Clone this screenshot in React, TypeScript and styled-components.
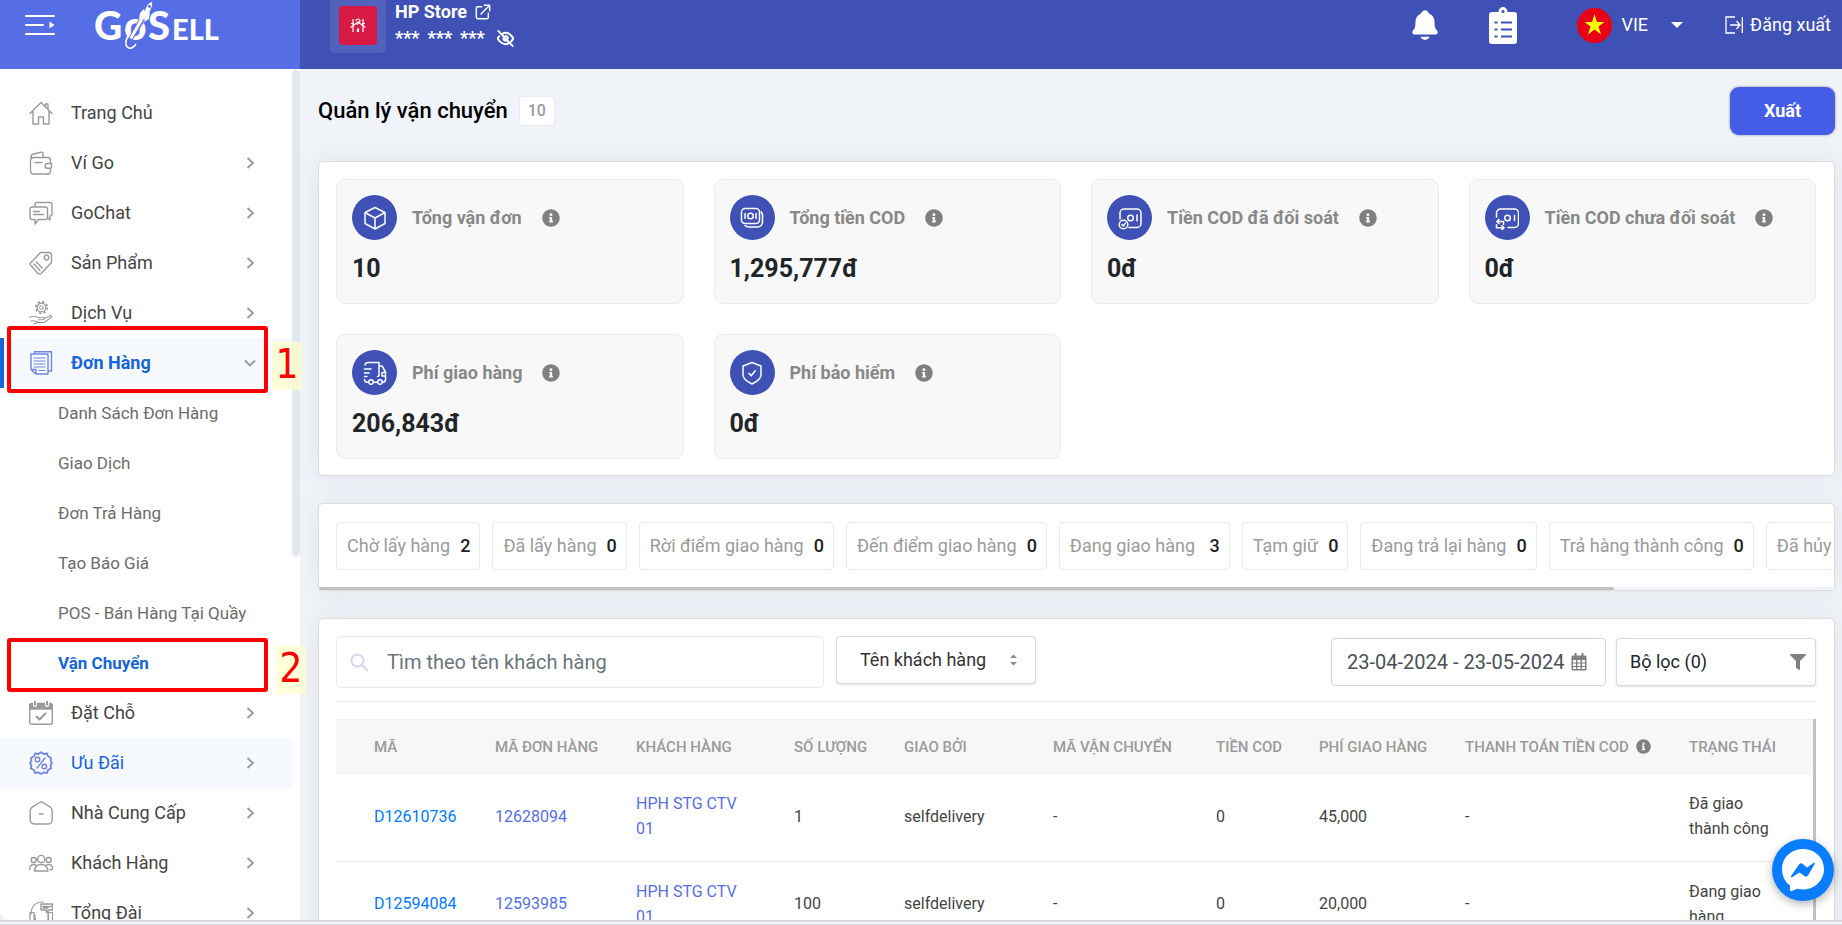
import React from "react";
import styled, { createGlobalStyle } from "styled-components";
import { FaFilter, FaInfoCircle } from "react-icons/fa";
import { IoNotifications } from "react-icons/io5";

const GlobalStyle = createGlobalStyle`
  *, *::before, *::after { box-sizing: border-box; }
  body { margin: 0; background: #f0f3f8; color: #212529; font: 16px/24px Roboto, "Open Sans", sans-serif; }
  button, input, select { font: inherit; color: inherit; }
  a { color: inherit; text-decoration: none; }
  ul { list-style: none; margin: 0; padding: 0; }
  h1, h2, p { margin: 0; font: inherit; }
`;

/* ---------- shell ---------- */

const Shell = styled.div`
  display: grid;
  grid-template: 69px minmax(0, 1fr) 5px / 300px minmax(0, 1fr);
  height: 100vh;
  overflow: hidden;
`;

const BottomEdge = styled.div`
  grid-column: 1 / -1;
  border-top: 2px solid #dcdcdc;
  border-bottom: 1px solid #c9d9de;
  background: #f5f6f7;
  position: relative;
  z-index: 3;
`;

/* ---------- header ---------- */

const Brand = styled.div`
  display: flex;
  align-items: flex-start;
  gap: 37px;
  padding: 0 0 0 24px;
  background: #556ee6;
  color: #fff;
`;

const IconButton = styled.button`
  display: flex;
  padding: 0;
  border: 0;
  background: none;
  color: inherit;
  cursor: pointer;
`;

const MenuToggle = styled(IconButton)`
  margin-top: 12px;
`;

const TopBar = styled.header`
  display: flex;
  align-items: flex-start;
  justify-content: space-between;
  padding: 0 11px 0 30px;
  background: #3f51b5;
  color: #fff;
  font-size: 18px;
`;

const Store = styled.div`
  display: flex;
  gap: 9px;
`;

const StoreLogo = styled.div`
  width: 56px;
  height: 53px;
  padding: 6px 9px 8px;
  border-radius: 0 0 5px 5px;
  background: #5262bc;
`;

const StoreInfo = styled.div`
  font-weight: 700;
`;

const StoreLine = styled.div`
  display: flex;
  align-items: center;
  gap: 8px;
  height: 24px;
`;

const Masked = styled(StoreLine)`
  height: 28px;
  svg { margin-left: 4px; }
`;

const TopActions = styled.div`
  display: flex;
  align-items: center;
  height: 50px;
`;

const BellButton = styled(IconButton)`
  margin-right: 47px;
`;

const TaskButton = styled(IconButton)`
  margin-right: 60px;
`;

const LanguageButton = styled(IconButton)`
  align-items: center;
  gap: 9px;
  margin-right: 42px;
`;

const Caret = styled.span`
  margin-left: 14px;
  border: 6px solid transparent;
  border-top-color: #fff;
  border-bottom: 0;
`;

const LogoutLink = styled.a`
  display: flex;
  align-items: center;
  gap: 7px;
`;

/* ---------- sidebar ---------- */

const Sidebar = styled.aside`
  position: relative;
  z-index: 2;
  display: flex;
  min-height: 0;
  background: #fff;
  border-bottom-left-radius: 10px;
`;

const Nav = styled.nav`
  flex: 1;
  padding-top: 19px;
`;

const ScrollRail = styled.div`
  width: 8px;
  padding-top: 1px;
`;

const ScrollThumb = styled.div`
  height: 486px;
  border-radius: 4px;
  background: #e1e7ef;
`;

const NavItem = styled.li`
  position: relative;
`;

const NavLink = styled.a<{ $tone?: "active" | "hover" }>`
  display: flex;
  align-items: center;
  gap: 18px;
  height: 50px;
  padding: 0 36px 0 25px;
  border-left: 4px solid ${(p) => (p.$tone === "active" ? "#1665d8" : "transparent")};
  background: ${(p) => (p.$tone ? "#f6f9fd" : "transparent")};
  color: ${(p) => (p.$tone ? "#1665d8" : "#444")};
  font-size: 18px;
  font-weight: ${(p) => (p.$tone === "active" ? 700 : 400)};
  svg:first-child { color: ${(p) => (p.$tone ? "#7185dd" : "#9a9a9a")}; flex: none; }
`;

const NavLabel = styled.span`
  flex: 1;
  white-space: nowrap;
`;

const SubLink = styled.a<{ $active?: boolean }>`
  display: flex;
  align-items: center;
  height: 50px;
  padding-left: 58px;
  color: ${(p) => (p.$active ? "#1665d8" : "#6c6c6c")};
  font-size: 17px;
  font-weight: ${(p) => (p.$active ? 700 : 400)};
  white-space: nowrap;
`;

const Highlight = styled.div<{ $top: number; $bottom: number }>`
  position: absolute;
  top: ${(p) => -p.$top}px;
  right: 24px;
  bottom: ${(p) => -p.$bottom}px;
  left: 7px;
  border: 4px solid #f00;
  border-radius: 3px;
  pointer-events: none;
`;

const StepMark = styled.div<{ $top: number; $right: number }>`
  position: absolute;
  top: ${(p) => p.$top}px;
  right: ${(p) => -p.$right}px;
  width: 30px;
  height: 48px;
  background: rgba(255, 255, 200, 0.7);
  color: #f00;
  font: 40px/44px "DejaVu Sans Condensed", "DejaVu Sans", sans-serif;
  text-align: center;
`;

const StepFrame = styled.div`
  position: absolute;
  inset: 0 0 auto 0;
  height: 50px;
  pointer-events: none;
`;

/* ---------- content ---------- */

const Content = styled.main`
  display: flex;
  flex-direction: column;
  min-width: 0;
  padding: 18px 7px 0 18px;
  overflow: hidden;
`;

const TitleRow = styled.div`
  display: flex;
  align-items: center;
  height: 48px;
  margin-bottom: 26px;
`;

const Title = styled.h1`
  color: #000;
  font-size: 22px;
  font-weight: 500;
`;

const CountBadge = styled.span`
  margin: 0 auto 0 11px;
  padding: 2px 8px;
  border: 1px solid #e8ebf2;
  border-radius: 4px;
  background: #fff;
  color: #999;
  font-size: 16px;
  font-weight: 500;
`;

const PrimaryButton = styled.button`
  width: 105px;
  height: 48px;
  border: 0;
  border-radius: 9px;
  background: #445ce6;
  color: #fff;
  font-size: 18px;
  font-weight: 700;
  box-shadow: 0 0 3px rgba(0, 0, 0, 0.4);
`;

const Panel = styled.section`
  flex: none;
  margin-bottom: 27px;
  border: 1px solid #dcdcdc;
  border-radius: 5px;
  background: #fff;
  box-shadow: 0 0 24px rgba(90, 97, 105, 0.1);
`;

const StatGrid = styled.div`
  display: grid;
  grid-template-columns: repeat(4, minmax(0, 1fr));
  gap: 30px;
  padding: 17px 18px 16px 17px;
`;

const StatCard = styled.article`
  padding: 15px 15px 18px;
  border: 1px solid #ebebeb;
  border-radius: 9px;
  background: #f8f8f8;
`;

const StatHead = styled.div`
  display: flex;
  align-items: center;
`;

const StatIcon = styled.span`
  display: flex;
  align-items: center;
  justify-content: center;
  width: 45px;
  height: 45px;
  border-radius: 50%;
  background: #3f51b5;
  color: #fff;
`;

const StatLabel = styled.h2`
  margin: 0 20px 0 15px;
  color: #888;
  font-size: 18px;
  font-weight: 700;
`;

const StatValue = styled.p`
  margin-top: 13px;
  font-size: 25px;
  line-height: 32px;
  font-weight: 700;
`;

const InfoIcon = styled(FaInfoCircle)`
  color: #808080;
`;

const ChipRow = styled.ul`
  display: flex;
  gap: 12px;
  padding: 18px 0 17px 17px;
  overflow: hidden;
`;

const Chip = styled.button`
  display: flex;
  align-items: center;
  gap: 10px;
  height: 48px;
  padding: 0 9px 0 10px;
  border: 1px solid #eaeaea;
  border-radius: 4px;
  background: #fff;
  color: #9b9b9b;
  font-size: 18px;
  white-space: pre;
  strong { color: #212121; font-weight: 500; }
`;

const ChipTrack = styled.div`
  height: 3px;
  background: #f0f3f8;
`;

const ChipThumb = styled.div`
  width: 85.5%;
  height: 3px;
  border-radius: 2px;
  background: #c1c1c1;
`;

const TablePanel = styled(Panel)`
  padding: 17px 18px 0 17px;
`;

const Filters = styled.div`
  display: flex;
  align-items: flex-start;
  height: 66px;
  border-bottom: 1px solid #e8e9ee;
  margin-bottom: 17px;
`;

const SearchBox = styled.label`
  display: flex;
  align-items: center;
  gap: 16px;
  flex: 0 1 488px;
  height: 52px;
  margin-right: 12px;
  padding: 0 13px;
  border: 1px solid #e8e9f3;
  border-radius: 5px;
  input {
    flex: 1;
    min-width: 0;
    border: 0;
    outline: 0;
    background: none;
    font-size: 20px;
  }
  input::placeholder { color: #6c757d; opacity: 1; }
`;

const Picker = styled.div`
  position: relative;
  width: 200px;
  margin-right: auto;
  select {
    appearance: none;
    width: 100%;
    height: 48px;
    padding: 0 40px 0 23px;
    border: 1px solid #d5d9ea;
    border-radius: 4px;
    background: #fff;
    box-shadow: 0 1px 2px rgba(0, 0, 0, 0.12);
    color: #333;
    font-size: 18px;
  }
  svg { position: absolute; right: 19px; top: 18px; pointer-events: none; }
`;

const DateBox = styled.label`
  display: flex;
  align-items: center;
  width: 275px;
  height: 48px;
  margin: 2px 10px 0 0;
  padding: 0 18px 0 15px;
  border: 1px solid #ced4da;
  border-radius: 4px;
  color: #495057;
  input {
    flex: 1;
    min-width: 0;
    padding: 0;
    border: 0;
    outline: 0;
    background: none;
    font-size: 20px;
  }
`;

const FilterButton = styled.button`
  display: flex;
  align-items: center;
  justify-content: space-between;
  width: 200px;
  height: 48px;
  margin-top: 2px;
  padding: 0 9px 0 13px;
  border: 1px solid #d5d9ea;
  border-radius: 4px;
  background: #fff;
  box-shadow: 0 1px 2px rgba(0, 0, 0, 0.12);
  font-size: 18px;
  svg { color: #808080; }
`;

const TableWrap = styled.div`
  border-right: 3px solid #c1c1c1;
`;

const Table = styled.table`
  width: 100%;
  border-collapse: collapse;
  table-layout: fixed;
  color: #444;
  line-height: 25px;
  th, td { padding: 0 12px 0 38px; text-align: left; }
  th {
    height: 55px;
    border-top: 1px solid #ececec;
    background: #f7f7f7;
    color: #9b9b9b;
    font-size: 15px;
    font-weight: 500;
    white-space: nowrap;
    svg { margin-left: 7px; vertical-align: -2px; }
  }
  td { height: 87px; padding-bottom: 3px; border-bottom: 1px solid #e8e9ee; }
  td:last-child { padding-right: 38px; }
`;

const CodeLink = styled.a`
  color: #007bff;
`;

const RefLink = styled.a`
  color: #556ee6;
`;

const ChatButton = styled.button`
  position: fixed;
  right: 8px;
  bottom: 24px;
  z-index: 4;
  width: 62px;
  height: 62px;
  padding: 0;
  border: 0;
  border-radius: 50%;
  background: #0a7cff;
  box-shadow: 0 3px 10px rgba(0, 0, 0, 0.3);
`;

/* ---------- drawings ---------- */

const Line = ({ children, size = 24, w = 1.4 }: { children: React.ReactNode; size?: number; w?: number }) => (
  <svg width={size} height={size} viewBox="0 0 24 24" fill="none" stroke="currentColor" strokeWidth={w} strokeLinecap="round" strokeLinejoin="round" aria-hidden>
    {children}
  </svg>
);

const navIcons: Record<string, React.ReactNode> = {
  home: <path d="M1 12.500 12 1.500l11 11M16.500 5.500V3h2.500v5.200M4 10.500V23h5.500v-7h5v7H20V10.500" />,
  wallet: (
    <path d="M21.500 12V9.500a3 3 0 0 0-3-3H4.500a3 3 0 0 0-3 3V20a3 3 0 0 0 3 3h14a3 3 0 0 0 3-3v-2.500M2 8V5.500c0-1.200.7-2 1.800-2.300l8-2c1.200-.3 2.200.3 2.200 1.600v3.500M6 11.500h7M22.500 12.500h-4a2.400 2.400 0 0 0 0 4.800h3l1-1.200z" />
  ),
  chat: (
    <path d="M6 5V3.500a2 2 0 0 1 2-2h13a2 2 0 0 1 2 2V13a2 2 0 0 1-2 2v4l-2.500-2.500M3 6h13.500a2 2 0 0 1 2 2v8.500a2 2 0 0 1-2 2H9.500L6 23v-4.500H3a2 2 0 0 1-2-2V8a2 2 0 0 1 2-2ZM4.500 10.500h6M4.500 13.500h10" />
  ),
  tag: (
    <>
      <path d="M11.500 1.500h8.500A2.500 2.500 0 0 1 22.500 4v7.500L12 22.500q-1.500 1-3 0L1.500 14q-.8-1 0-2ZM5 13l6 6.500M7.500 11l5.500 6" />
      <ellipse cx="17.500" cy="6.500" rx="2.200" ry="2.600" />
    </>
  ),
  service: (
    <>
      <circle cx="12.500" cy="6.500" r="4.300" strokeWidth="1.200" />
      <circle cx="12.500" cy="6.500" r="1.900" strokeWidth="1" />
      <circle cx="12.500" cy="6.500" r="5.800" strokeWidth="1.700" strokeDasharray="2.250 2.300" strokeLinecap="butt" />
      <path strokeWidth="1.100" d="M.5 16.500c3-2 6-1.200 8.500 0h5c1.500.2 1.500 2 0 2.200H9.500M15.500 17.500l5.500-2.800c1.500-.4 2.500.8 1.500 1.600L15 21.500H8.500l-4 1.500M2 20c3-1 5 .5 7 1" />
    </>
  ),
  orders: (
    <>
      <path d="M5.500 2.500V.8h17V20h-2.700M2 3h17v20H7l-5-4.500ZM2 18.500h5V23" />
      <path d="M5 7h11M5 10h11M5 13h11M5 16h11M10 19.500h6" strokeWidth="1.100" />
    </>
  ),
  booking: (
    <>
      <rect x="0.700" y="3" width="22.600" height="20.300" rx="2" />
      <path d="M.7 8V4.500a2 2 0 0 1 2-2h18.600a2 2 0 0 1 2 2V8z" fill="currentColor" />
      <path d="M6 0v4M18 0v4" stroke="#fff" strokeWidth="4" />
      <path d="M6 .8v3M18 .8v3" strokeWidth="2" />
      <path d="m7.500 15.500 3 3 6-6" strokeWidth="2" />
    </>
  ),
  discount: (
    <>
      <path d="M12 1.200 14.700 3 18 2.500l1.200 3 2.900 1.500-.4 3.200L23 12l-1.500 2.500.6 3-3 1.400L18 22l-3.200-.6L12 23l-2.800-1.600L6 22l-1.200-3.100-3-1.400.6-3L1 12l1.400-1.900L2 7l2.900-1.500 1.200-3L9.400 3Z" strokeWidth="1.800" />
      <circle cx="8.500" cy="8.500" r="2.300" />
      <circle cx="15.300" cy="15.500" r="2.300" />
      <path d="M16 7 8 17" />
    </>
  ),
  supplier: <path d="M10.500 1.500 3.200 6.200Q1.200 7.500 1.200 10v9a4 4 0 0 0 4 4h14a4 4 0 0 0 4-4v-9q0-2.500-2-3.800L13.900 1.500q-1.700-1-3.400 0ZM10.500 13h3.500" />,
  customers: (
    <>
      <circle cx="12.200" cy="8" r="3.600" />
      <circle cx="4.700" cy="9" r="2.500" />
      <circle cx="19.700" cy="9" r="2.500" />
      <path d="M5.500 20c.3-4.500 3-6.500 6.700-6.500s6.400 2 6.700 6.500zM.6 18.500c.2-3 1.600-5 4.100-5 1 0 1.900.3 2.500 1M17 14.500c.7-.7 1.600-1 2.700-1 2.500 0 3.900 2 4.100 5h-3" />
    </>
  ),
  support: (
    <>
      <path d="M2 13C2 6 6.500 1 13 1h1M1 11.500h4v12H1zM19.500 11.500h4v12h-4zM5 12q2 5 1 11M19 10v13" strokeWidth="1.200" />
      <path d="M12 3h11.500v6h-4l-2 2.500V9H12zM14 5.500h8M14 7h5" />
    </>
  ),
};

const Chevron = ({ down }: { down?: boolean }) => (
  <svg width="12" height="12" viewBox="0 0 12 12" fill="none" stroke="#999" strokeWidth="1.800" aria-hidden>
    <path d={down ? "M1 3.500 6 8.500 11 3.500" : "M3.500 1 9 6 3.500 11"} />
  </svg>
);

const statIcons: Record<string, React.ReactNode> = {
  box: <path d="m12 1.500 10 5v11l-10 5.500-10-5.500v-11ZM2 6.500 12 12l10-5.500M12 12v11" />,
  cash: (
    <>
      <rect x="1.500" y="2.500" width="18" height="15" rx="3.500" />
      <circle cx="10.500" cy="10" r="2.800" />
      <path d="M5 7.500v5M16 7.500v5M21 6c1 .6 1.500 1.500 1.500 3v7a5 5 0 0 1-5 5H9c-2 0-3-.5-4-1.500" />
    </>
  ),
  cashDone: (
    <>
      <path d="M2 13V7a4 4 0 0 1 4-4h13a4 4 0 0 1 4 4v10.500a4 4 0 0 1-4 4h-8M19 9v6" />
      <circle cx="12.500" cy="12" r="2.800" />
      <circle cx="5.500" cy="18.500" r="4.300" />
      <path d="m3.800 18.500 1.400 1.400 2.200-2.600" />
    </>
  ),
  cashPending: (
    <>
      <path d="M1.500 11V7a4 4 0 0 1 4-4h14a4 4 0 0 1 4 4v10.500a4 4 0 0 1-4 4H13M19.500 9.500v5" />
      <circle cx="12.500" cy="12" r="2.800" />
      <path d="M8.500 18.500v-3H2M4 13.500l-2.200 2 2.200 2M1.500 18.800v3H8.500M6.800 19.800l2.200 2-2.200 2" />
    </>
  ),
  truck: (
    <>
      <path d="M2 4c.4-2 1.500-2.500 3-2.500h11V14c0 1-.6 1.500-1.500 1.500M1.500 8H8M1.500 12H6M1.500 15.500H4M1.500 18.500c0 2 1 2.800 3.300 2.800M16 5h3l3.500 6v7.500c0 1.800-1 2.800-2.500 2.800M11.200 21.300h2.500M22.500 11.500H19V15h3.500" />
      <circle cx="8" cy="21" r="2.300" />
      <circle cx="17" cy="21" r="2.300" />
    </>
  ),
  shield: <path d="M12 1.500 21 5v9c0 3.500-4 6.500-9 9-5-2.500-9-5.500-9-9V5ZM8.800 12.300l2.400 2.400 4-5" />,
};

const Logo = () => (
  <svg width="130" height="52" viewBox="0 0 130 52" fill="#fff" role="img" aria-label="GoSell">
    <g fontFamily="Lato, sans-serif" fontWeight="900">
      <text x="1" y="40" fontSize="39">G</text>
      <text x="31" y="40" fontSize="39">o</text>
      <text x="55" y="40" fontSize="40">S</text>
      <text x="79" y="40" fontSize="29">ELL</text>
    </g>
    <path d="M60 1q-5 1-7 6L36 38l3 2L57 12q3-5 3-11Z" stroke="#556ee6" strokeWidth="1" />
    <path d="m51 9-4 4-1 7 5-5zM57 12l-1 7-5 3 2-6z" />
    <circle cx="56.500" cy="6.500" r="1.400" fill="#556ee6" />
    <path d="M51 19 41 37" stroke="#556ee6" />
    <path d="M35 36c-3 5-3 11 1 12 2 .5 5-1 7-4" fill="none" stroke="#fff" strokeWidth="1.500" />
  </svg>
);

/* ---------- data ---------- */

const menu = [
  { icon: "home", label: "Trang Chủ", leaf: true },
  { icon: "wallet", label: "Ví Go" },
  { icon: "chat", label: "GoChat" },
  { icon: "tag", label: "Sản Phẩm" },
  { icon: "service", label: "Dịch Vụ" },
  { icon: "orders", label: "Đơn Hàng", tone: "active" as const },
  { icon: "booking", label: "Đặt Chỗ" },
  { icon: "discount", label: "Ưu Đãi", tone: "hover" as const },
  { icon: "supplier", label: "Nhà Cung Cấp" },
  { icon: "customers", label: "Khách Hàng" },
  { icon: "support", label: "Tổng Đài" },
];

const orderMenu = ["Danh Sách Đơn Hàng", "Giao Dịch", "Đơn Trả Hàng", "Tạo Báo Giá", "POS - Bán Hàng Tại Quầy", "Vận Chuyển"];

const stats = [
  ["box", "Tổng vận đơn", "10"],
  ["cash", "Tổng tiền COD", "1,295,777đ"],
  ["cashDone", "Tiền COD đã đối soát", "0đ"],
  ["cashPending", "Tiền COD chưa đối soát", "0đ"],
  ["truck", "Phí giao hàng", "206,843đ"],
  ["shield", "Phí bảo hiểm", "0đ"],
];

const statuses: [string, number][] = [
  ["Chờ lấy hàng", 2],
  ["Đã lấy hàng", 0],
  ["Rời điểm giao hàng", 0],
  ["Đến điểm giao hàng", 0],
  ["Đang giao hàng ", 3],
  ["Tạm giữ", 0],
  ["Đang trả lại hàng", 0],
  ["Trả hàng thành công", 0],
  ["Đã hủy", 5],
];

const columns: [string, number][] = [
  ["MÃ", 121],
  ["MÃ ĐƠN HÀNG", 141],
  ["KHÁCH HÀNG", 158],
  ["SỐ LƯỢNG", 110],
  ["GIAO BỞI", 149],
  ["MÃ VẬN CHUYỂN", 163],
  ["TIỀN COD", 103],
  ["PHÍ GIAO HÀNG", 146],
  ["THANH TOÁN TIỀN COD", 224],
  ["TRẠNG THÁI", 162],
];

const rows = [
  { code: "D12610736", order: "12628094", customer: "HPH STG CTV 01", qty: "1", fee: "45,000", status: "Đã giao thành công" },
  { code: "D12594084", order: "12593985", customer: "HPH STG CTV 01", qty: "100", fee: "20,000", status: "Đang giao hàng" },
];

export default function App() {
  return (
    <>
      <GlobalStyle />
      <Shell>
        <Brand>
          <MenuToggle aria-label="Thu gọn menu">
            <svg width="32" height="26" viewBox="0 0 32 26" fill="none" stroke="#fff" strokeWidth="2.200" strokeLinecap="round">
              <path d="M2 4h28M2 13h17M2 22h28" />
              <path d="M25.500 9.500v7l5-3.500z" fill="#fff" stroke="none" />
            </svg>
          </MenuToggle>
          <Logo />
        </Brand>
        <TopBar>
          <Store>
            <StoreLogo>
              <svg width="38" height="39" viewBox="0 0 38 39" fill="none" stroke="#fff" strokeWidth="1.200">
                <rect width="38" height="39" rx="4" fill="#d71a45" stroke="none" />
                <path d="M11.500 21.500 19 16l7.500 5.500M14 13v13M24 13v13M17 15q0-2 2-2t2 2l-3 4M12 17.500h3M23 17.500h3" />
                <path d="M19 22.500v3.500" strokeWidth="2.200" />
              </svg>
            </StoreLogo>
            <StoreInfo>
              <StoreLine>
                HP Store
                <Line size={16} w={2.200}>
                  <path d="M10 4H4a2 2 0 0 0-2 2v14a2 2 0 0 0 2 2h14a2 2 0 0 0 2-2v-6M14 2h8v8M22 2 9 15" />
                </Line>
              </StoreLine>
              <Masked>
                <span>***</span>
                <span>***</span>
                <span>***</span>
                <Line size={17} w={2.800}>
                  <path d="M3 9C1.500 10.500 1 12 1 12s4 8 11 8c1.500 0 3-.4 4-1M8 5c1.200-.6 2.500-1 4-1 7 0 11 8 11 8s-1 2.200-3 4.200M9 12a3 3 0 0 0 4 3M12 8.500a3.500 3.500 0 0 1 3.500 3.500M2 1.500l20 21" />
                </Line>
              </Masked>
            </StoreInfo>
          </Store>
          <TopActions>
            <BellButton aria-label="Thông báo">
              <IoNotifications size={34} />
            </BellButton>
            <TaskButton aria-label="Công việc">
              <svg width="28" height="37" viewBox="0 0 28 37" aria-hidden>
                <path d="M3 5h6.500a4.500 5 0 0 1 9 0H25a3 3 0 0 1 3 3v26a3 3 0 0 1-3 3H3a3 3 0 0 1-3-3V8a3 3 0 0 1 3-3Z" fill="#fff" />
                <circle cx="14" cy="4.500" r="1.500" fill="#3f51b5" />
                <path d="M12 15.500h11M12 22.500h11M12 29.500h11M5.500 15.500h3M5.500 22.500h3M5.500 29.500h3" stroke="#3f51b5" strokeWidth="2.200" />
              </svg>
            </TaskButton>
            <LanguageButton>
              <svg width="35" height="35" viewBox="0 0 35 35" aria-hidden>
                <circle cx="17.500" cy="17.500" r="17.500" fill="#ea0014" />
                <path d="m17.500 6 2.400 8h7.600l-6 4.500 2.500 8-6.500-5-6.500 5 2.500-8-6-4.500h7.600z" fill="#ff0" />
              </svg>
              VIE
              <Caret />
            </LanguageButton>
            <LogoutLink href="#logout">
              <svg width="18" height="18" viewBox="0 0 18 18" fill="none" stroke="#fff" strokeWidth="1.300" aria-hidden>
                <path d="M10 1H1v16h9M17.300 1v16M5 9h10M11.500 5 15 9l-3.500 4" />
              </svg>
              Đăng xuất
            </LogoutLink>
          </TopActions>
        </TopBar>

        <Sidebar>
          <Nav>
            <ul>
              {menu.map((item) => (
                <NavItem key={item.icon}>
                  <NavLink href={`#${item.icon}`} $tone={item.tone}>
                    <Line>{navIcons[item.icon]}</Line>
                    <NavLabel>{item.label}</NavLabel>
                    {!item.leaf && <Chevron down={item.tone === "active"} />}
                  </NavLink>
                  {item.tone === "active" && (
                    <>
                      <ul>
                        {orderMenu.map((label, i) => (
                          <NavItem key={label}>
                            <SubLink href={`#orders-${i}`} $active={i === 5}>
                              {label}
                            </SubLink>
                            {i === 5 && (
                              <>
                                <Highlight $top={0} $bottom={4} />
                                <StepMark $top={8} $right={14}>2</StepMark>
                              </>
                            )}
                          </NavItem>
                        ))}
                      </ul>
                      <StepFrame>
                        <Highlight $top={12} $bottom={5} />
                        <StepMark $top={4} $right={10}>1</StepMark>
                      </StepFrame>
                    </>
                  )}
                </NavItem>
              ))}
            </ul>
          </Nav>
          <ScrollRail>
            <ScrollThumb />
          </ScrollRail>
        </Sidebar>

        <Content>
          <TitleRow>
            <Title>Quản lý vận chuyển</Title>
            <CountBadge>10</CountBadge>
            <PrimaryButton>Xuất</PrimaryButton>
          </TitleRow>

          <Panel>
            <StatGrid>
              {stats.map(([icon, label, value]) => (
                <StatCard key={icon}>
                  <StatHead>
                    <StatIcon>
                      <Line w={1.500}>{statIcons[icon]}</Line>
                    </StatIcon>
                    <StatLabel>{label}</StatLabel>
                    <InfoIcon size={18} />
                  </StatHead>
                  <StatValue>{value}</StatValue>
                </StatCard>
              ))}
            </StatGrid>
          </Panel>

          <Panel>
            <ChipRow>
              {statuses.map(([label, count]) => (
                <li key={label}>
                  <Chip>
                    {label}
                    <strong>{count}</strong>
                  </Chip>
                </li>
              ))}
            </ChipRow>
            <ChipTrack>
              <ChipThumb />
            </ChipTrack>
          </Panel>

          <TablePanel>
            <Filters>
              <SearchBox>
                <svg width="19" height="19" viewBox="0 0 19 19" fill="none" stroke="#d5d9ea" strokeWidth="2.200" aria-hidden>
                  <circle cx="7.500" cy="7.500" r="6" />
                  <path d="m12 12 6 6" />
                </svg>
                <input aria-label="Tìm kiếm" placeholder="Tìm theo tên khách hàng" />
              </SearchBox>
              <Picker>
                <select aria-label="Tìm theo">
                  <option>Tên khách hàng</option>
                </select>
                <svg width="7" height="12" viewBox="0 0 7 12" fill="#8a8f94" aria-hidden>
                  <path d="M0 4 3.500.5 7 4zM0 8l3.500 3.500L7 8z" />
                </svg>
              </Picker>
              <DateBox>
                <input aria-label="Khoảng ngày" readOnly value="23-04-2024 - 23-05-2024" />
                <svg width="16" height="18" viewBox="0 0 16 18" aria-hidden>
                  <rect x="0.500" y="2.500" width="15" height="15" rx="1.500" fill="#808080" />
                  <path d="M2 7h3v2.500H2zM6.500 7h3v2.500h-3zM11 7h3v2.500h-3zM2 10.500h3V13H2zM6.500 10.500h3V13h-3zM11 10.500h3V13h-3zM2 14h3v2H2zM6.500 14h3v2h-3zM11 14h3v2h-3z" fill="#fff" />
                  <path d="M4.500 0v4.500M11.500 0v4.500" stroke="#808080" strokeWidth="2" />
                </svg>
              </DateBox>
              <FilterButton>
                Bộ lọc (0)
                <FaFilter size={16} />
              </FilterButton>
            </Filters>
            <TableWrap>
              <Table>
                <colgroup>
                  {columns.map(([label, width]) => (
                    <col key={label} width={width} />
                  ))}
                </colgroup>
                <thead>
                  <tr>
                    {columns.map(([label]) => (
                      <th key={label} scope="col">
                        {label}
                        {label.startsWith("THANH") && <InfoIcon size={15} />}
                      </th>
                    ))}
                  </tr>
                </thead>
                <tbody>
                  {rows.map((r) => (
                    <tr key={r.code}>
                      <td><CodeLink href={`#${r.code}`}>{r.code}</CodeLink></td>
                      <td><RefLink href={`#${r.order}`}>{r.order}</RefLink></td>
                      <td><RefLink href="#customer">{r.customer}</RefLink></td>
                      <td>{r.qty}</td>
                      <td>selfdelivery</td>
                      <td>-</td>
                      <td>0</td>
                      <td>{r.fee}</td>
                      <td>-</td>
                      <td>{r.status}</td>
                    </tr>
                  ))}
                </tbody>
              </Table>
            </TableWrap>
          </TablePanel>
        </Content>

        <BottomEdge />
      </Shell>
      <ChatButton aria-label="Chat Messenger">
        <svg width="62" height="62" viewBox="-31 -31 62 62" aria-hidden>
          <path d="M0-21c11.500 0 21 8.500 21 20S11.500 19.500 0 19.500q-3 0-6-.8l-5 2.300q-2 .6-2-1.500v-4C-18 12-21 6-21-1-21-12.500-11.500-21 0-21Z" fill="#fff" />
          <path d="m-12 6 8-11.500q1.600-2 3.600-.5L4-2.500 10.500-7q2-1 1.200.9L5 5.500Q3.300 7.500 1.300 6L-3.500 2.500-10.500 7q-2 1-1.500-1Z" fill="#0a7cff" />
        </svg>
      </ChatButton>
    </>
  );
}
